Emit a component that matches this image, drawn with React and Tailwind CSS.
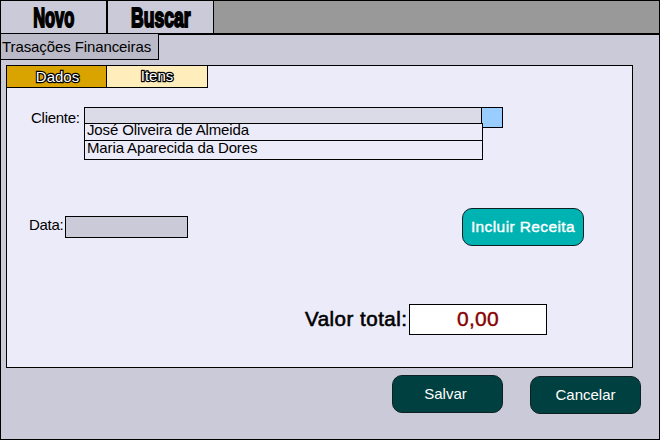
const heading =
  "inline-block origin-center text-[27px] leading-[34px] font-bold text-black [-webkit-text-stroke:1.9px_black] whitespace-nowrap";
const outlined =
  "text-[15px] leading-5 text-white [-webkit-text-stroke:2.4px_black] [paint-order:stroke_fill] whitespace-nowrap";

function TopBar() {
  return (
    <nav className="flex h-[33px] bg-[#999999]">
      <button className="flex h-8 w-[105px] justify-center overflow-hidden bg-[#cbcad8]">
        <span className={`${heading} scale-x-[0.61]`}>Novo</span>
      </button>
      <div className="h-8 w-0.5 bg-black" />
      <button className="flex h-8 w-[105px] justify-center overflow-hidden bg-[#cbcad8]">
        <span className={`${heading} scale-x-[0.65]`}>Buscar</span>
      </button>
      <div className="h-8 w-px bg-black" />
    </nav>
  );
}

function Tabs() {
  return (
    <div className="flex h-[22px] w-[201px] border-b border-black">
      <button className="flex w-[100px] justify-center border-r border-black bg-[#d9a300] pt-px pl-0.5">
        <span className={outlined}>Dados</span>
      </button>
      <button className="flex w-[101px] justify-center border-r border-black bg-[#ffeebb]">
        <span className={outlined}>Itens</span>
      </button>
    </div>
  );
}

function ClientField() {
  return (
    <div className="mt-[19px] ml-6 flex items-start">
      <label className="w-[53px] pt-0.5 text-[15px] leading-[18px] tracking-[-0.27px] whitespace-nowrap">Cliente:</label>
      <div className="w-[399px]">
        <div className="h-4 w-[398px] border-t border-l border-black bg-[#dbdae7]" />
        <ul className="border border-black text-[15px] tracking-[-0.13px]">
          <li className="h-[17px] border-b border-black pl-0.5 leading-[12px]">José Oliveira de Almeida</li>
          <li className="h-[18px] pl-0.5 leading-[14px]">Maria Aparecida da Dores</li>
        </ul>
      </div>
      <div className="-ml-0.5 h-[21px] w-[22px] border border-black bg-[#99ccff] [clip-path:polygon(0_0,100%_0,100%_100%,2px_100%,2px_16px,0_16px)]" />
    </div>
  );
}

function ActionButton({ children, className }) {
  return (
    <button
      className={`flex items-center justify-center rounded-[10px] border border-[#102022] text-white whitespace-nowrap ${className}`}
    >
      {children}
    </button>
  );
}

export default function App() {
  return (
    <main className="h-[440px] w-[660px] overflow-hidden border border-black bg-[#cbcad8] font-['Liberation_Sans',Arial,sans-serif] text-black">
      <TopBar />
      <div className="-mt-px h-0.5 bg-black" />
      <h1 className="relative -mt-px h-[26px] w-[158px] border-r border-b border-black bg-[#bbbac8] pl-px text-[15px] leading-[25px] tracking-[-0.1px] whitespace-nowrap">
        Trasações Financeiras
      </h1>
      <section className="mt-[5px] ml-[5px] h-[303px] w-[627px] border border-black bg-[#ecebf9]">
        <Tabs />
        <ClientField />
        <div className="mt-12 ml-[22px] flex items-start">
          <label className="mt-2 w-9 text-[15px] leading-[18px] tracking-[-0.3px]">Data:</label>
          <div className="mt-2 h-[22px] w-[123px] border border-black bg-[#cbcad8]" />
          <ActionButton className="ml-[274px] h-[38px] w-[122px] bg-[#00b3b3] text-[15.5px] tracking-[0.4px] [-webkit-text-stroke:0.4px_white]">
            Incluir Receita
          </ActionButton>
        </div>
        <div className="mt-[58px] ml-[298px] flex items-start">
          <span className="w-[104px] text-[20.5px] leading-[29px] tracking-[0.5px] whitespace-nowrap [-webkit-text-stroke:0.6px_black]">
            Valor total:
          </span>
          <div className="h-[31px] w-[138px] border border-black bg-white text-center text-[21px] leading-[27px] tracking-[0.3px] text-[#880000] [-webkit-text-stroke:0.4px_#880000]">
            0,00
          </div>
        </div>
      </section>
      <footer className="mt-[7px] ml-[391px] flex items-start gap-[27px]">
        <ActionButton className="h-[38px] w-[111px] bg-[#004040] pr-1 text-[15px]">Salvar</ActionButton>
        <ActionButton className="mt-px h-[38px] w-[111px] bg-[#004040] text-[15px]">Cancelar</ActionButton>
      </footer>
    </main>
  );
}
